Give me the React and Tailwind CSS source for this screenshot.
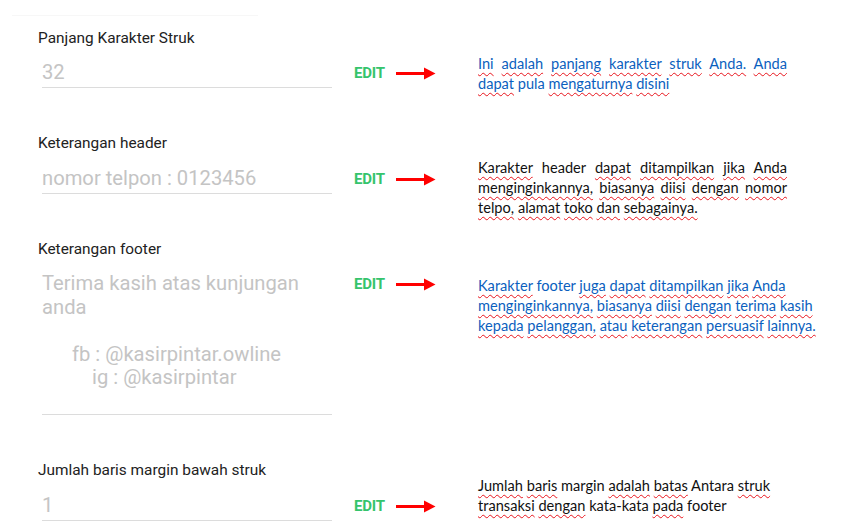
import React from 'react';

// words starting with "~" get the red spell-check squiggle
function Line({ text, justify, className = '' }) {
  const words = text.split(' ');
  return (
    <div
      className={
        'whitespace-nowrap ' +
        (justify ? 'w-[309px] text-justify [text-align-last:justify] ' : '') +
        className
      }
    >
      {words.map((w, i) => (
        <React.Fragment key={i}>
          {i > 0 && ' '}
          {w.startsWith('~') ? (
            <span className="underline decoration-wavy decoration-[#e8141c] decoration-1 underline-offset-[3px] [text-decoration-skip-ink:none]">
              {w.slice(1)}
            </span>
          ) : (
            <span>{w}</span>
          )}
        </React.Fragment>
      ))}
    </div>
  );
}

function EditArrow() {
  return (
    <div className="flex items-center h-[24px]">
      <span className="font-['Roboto'] font-bold text-[15px] text-[#35c46c] tracking-[-0.2px]">EDIT</span>
      <svg width="40" height="13" viewBox="0 0 40 13" className="ml-[11px]">
        <rect x="0" y="5" width="29" height="3" fill="#ff0000" />
        <polygon points="28,0.5 39.5,6.5 28,12.5" fill="#ff0000" />
      </svg>
    </div>
  );
}

function Section({ label, lines, note, noteTop, height, fieldPad = 'pb-[2.5px]' }) {
  return (
    <div className={'flex items-start shrink-0 ' + height}>
      <div className="w-[354px] pl-[38px] shrink-0">
        <div className="font-['Roboto'] text-[15.4px] leading-[20px] text-[#222222] whitespace-nowrap">{label}</div>
        <div
          className={
            "ml-[4px] w-[290px] mt-[13.5px] border-b border-[#dcdcdc] font-['Roboto'] text-[20.2px] leading-[23.5px] text-[#c4c4c4] " +
            fieldPad
          }
        >
          {lines.map((l, i) => (
            <div key={i} className={'h-[23.5px] whitespace-nowrap ' + (l.cls || '')}>
              {l.t}
            </div>
          ))}
        </div>
      </div>
      <div className="w-[124px] shrink-0 mt-[34px]">
        <EditArrow />
      </div>
      <div className={"font-['Lato'] text-[14.6px] leading-[20px] " + noteTop}>{note}</div>
    </div>
  );
}

export default function App() {
  return (
    <div className="w-[848px] h-[526px] bg-white overflow-hidden">
      <div className="h-px bg-[#f7f7f7] ml-[12px] w-[246px] mt-[15px]" />
      <div className="mt-[11.5px] flex flex-col gap-[45px]">
        <Section
          label="Panjang Karakter Struk"
          height="h-[60.5px]"
          lines={[{ t: '32' }]}
          noteTop="mt-[26.5px] text-[#0b5fbe]"
          note={
            <>
              <Line justify text="~Ini ~adalah ~panjang ~karakter ~struk ~Anda. ~Anda" />
              <Line text="~dapat pula ~mengaturnya ~disini" />
            </>
          }
        />
        <Section
          label="Keterangan header"
          height="h-[60.5px]"
          lines={[{ t: 'nomor telpon : 0123456' }]}
          noteTop="mt-[25px] text-[#111111]"
          note={
            <>
              <Line justify text="~Karakter header ~dapat ~ditampilkan ~jika ~Anda" />
              <Line justify text="~menginginkannya, ~biasanya ~diisi ~dengan ~nomor" />
              <Line text="~telpo, ~alamat ~toko ~dan ~sebagainya." />
            </>
          }
        />
        <Section
          label="Keterangan footer"
          height="h-[176.5px]"
          fieldPad="pb-[1px]"
          lines={[
            { t: 'Terima kasih atas kunjungan' },
            { t: 'anda' },
            { t: '' },
            { t: 'fb : @kasirpintar.owline', cls: 'pl-[30px]' },
            { t: 'ig : @kasirpintar', cls: 'pl-[50px]' },
            { t: '' },
          ]}
          noteTop="mt-[37.5px] text-[#0b5fbe]"
          note={
            <>
              <Line text="~Karakter footer ~juga ~dapat ~ditampilkan ~jika ~Anda" />
              <Line text="~menginginkannya, ~biasanya ~diisi ~dengan ~terima ~kasih" />
              <Line text="~kepada ~pelanggan, ~atau ~keterangan ~persuasif ~lainnya." />
            </>
          }
        />
        <Section
          label="Jumlah baris margin bawah struk"
          height="h-[61px]"
          lines={[{ t: '1' }]}
          noteTop="mt-[16px] text-[#111111]"
          note={
            <>
              <Line text="~Jumlah ~baris margin ~adalah ~batas Antara ~struk" />
              <Line text="~transaksi ~dengan kata-kata ~pada footer" />
            </>
          }
        />
      </div>
    </div>
  );
}
